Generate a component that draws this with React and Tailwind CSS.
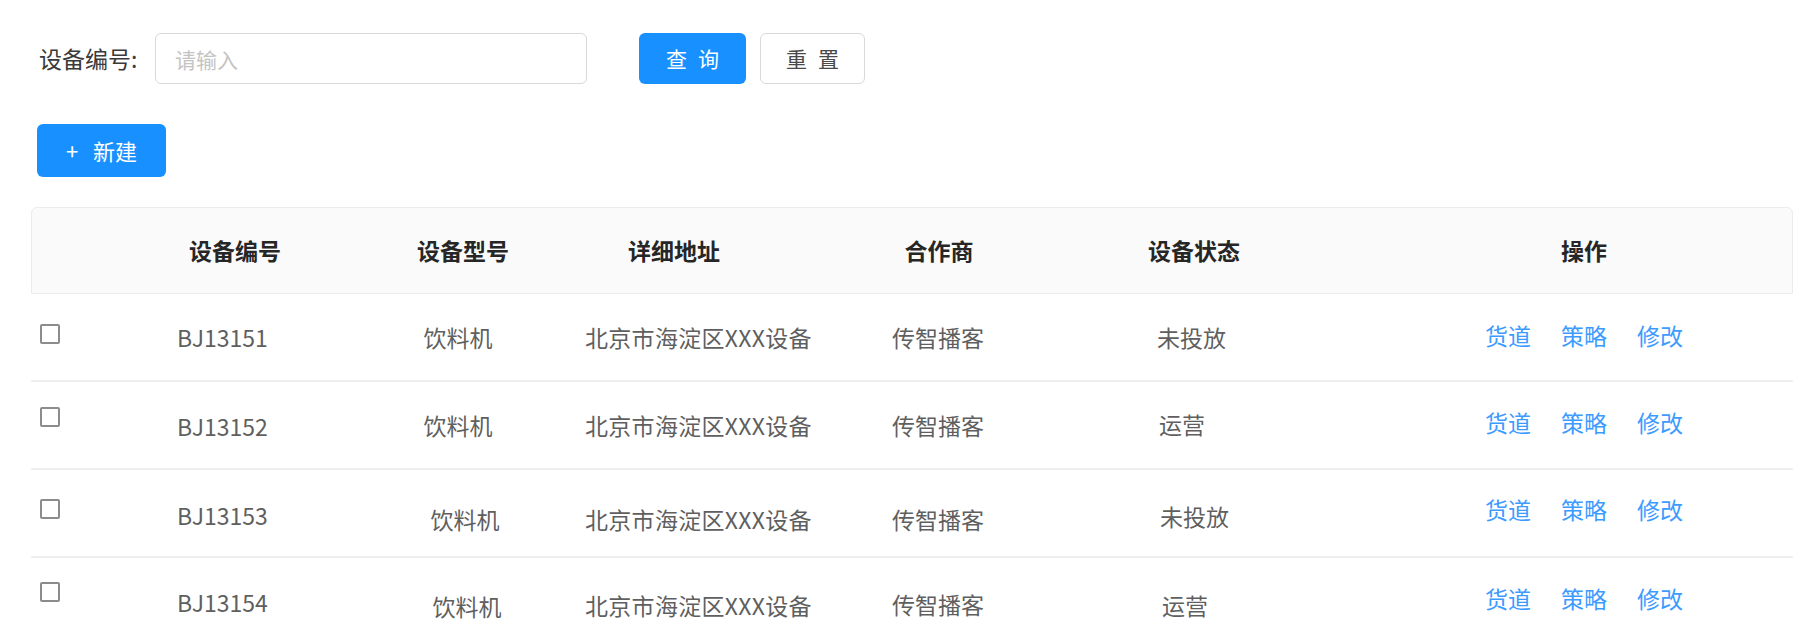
import React from 'react';

// Device list page: search bar, create button and device table
const rows = [
  {
    id: 'BJ13151', model: '饮料机', status: '未投放',
    cb: '-translate-y-[3px]', idc: '', modelc: '-translate-x-[4px]', addrc: '', partc: '', statc: 'pl-[51px]', linkc: '-translate-y-[2px]',
  },
  {
    id: 'BJ13152', model: '饮料机', status: '运营',
    cb: '-translate-y-[8px]', idc: 'translate-y-[1px]', modelc: '-translate-x-[4px]', addrc: '', partc: '', statc: 'pl-[53px] -translate-y-[1px]', linkc: '-translate-y-[3px]',
  },
  {
    id: 'BJ13153', model: '饮料机', status: '未投放',
    cb: '-translate-y-[4px]', idc: 'translate-y-[2px]', modelc: 'translate-x-[3px] translate-y-[6px]', addrc: 'translate-y-[6px]', partc: 'translate-y-[6px]', statc: 'pl-[54px] translate-y-[3px]', linkc: '-translate-y-[4px]',
  },
  {
    id: 'BJ13154', model: '饮料机', status: '运营',
    cb: '-translate-y-[9px]', idc: 'translate-y-[1px]', modelc: 'translate-x-[5px] translate-y-[5px]', addrc: 'translate-y-[4px]', partc: 'translate-y-[3px]', statc: 'pl-[56px] translate-y-[4px]', linkc: '-translate-y-[3px]',
  },
];

const cols = 'grid grid-cols-[89px_228px_228px_194px_336px_174px_1fr]';

export default function App() {
  return (
    <div className="min-h-screen bg-white pt-[33px] pl-[31px] pr-[19px] font-['Noto_Sans_CJK_SC',sans-serif]">
      {/* Search bar */}
      <div className="flex items-center h-[51px]">
        <label className="ml-[8px] w-[98px] text-[23px] text-[#3a3a3a] whitespace-nowrap">设备编号:</label>
        <input
          placeholder="请输入"
          className="ml-[18px] w-[432px] h-[51px] px-[19px] text-[21px] border border-[#d9d9d9] rounded-[6px] outline-none placeholder:text-[#c4c4c4]"
        />
        <button className="ml-[52px] w-[107px] h-[51px] flex items-center justify-center gap-[11px] bg-[#1890ff] text-white text-[21px] rounded-[6px]">
          <span>查</span><span>询</span>
        </button>
        <button className="ml-[14px] w-[105px] h-[51px] flex items-center justify-center gap-[11px] bg-white border border-[#d9d9d9] text-[#4a4a4a] text-[21px] rounded-[6px]">
          <span>重</span><span>置</span>
        </button>
      </div>

      {/* Create */}
      <button className="mt-[40px] ml-[6px] w-[129px] h-[53px] flex items-center justify-center gap-[15px] bg-[#1890ff] text-white text-[22px] rounded-[6px]">
        <span>+</span>
        <span>新建</span>
      </button>

      {/* Table */}
      <div className="mt-[30px]">
        <div className={`${cols} h-[87px] bg-[#fafafa] border border-[#ececec] rounded-t-[6px] text-[23px] font-bold text-[#262626]`}>
          <div />
          <div className="flex items-center justify-center">设备编号</div>
          <div className="flex items-center justify-center">设备型号</div>
          <div className="flex items-center justify-center">详细地址</div>
          <div className="flex items-center justify-center">合作商</div>
          <div className="flex items-center justify-center">设备状态</div>
          <div className="flex items-center justify-center pl-[95px]">操作</div>
        </div>

        {rows.map((r) => (
          <div key={r.id} className={`${cols} h-[88px] border-b-2 border-[#efefef] text-[23px] text-[#5f5f5f] whitespace-nowrap`}>
            <div className="flex items-center pl-[9px]">
              <div className={`w-[20px] h-[20px] border-2 border-[#8c8c8c] rounded-[2px] ${r.cb}`} />
            </div>
            <div className="flex items-center pl-[57px]">
              <span className={r.idc}>{r.id}</span>
            </div>
            <div className="flex items-center justify-center">
              <span className={r.modelc}>{r.model}</span>
            </div>
            <div className="flex items-center pl-[9px]">
              <span className={`tracking-[0.3px] ${r.addrc}`}>北京市海淀区XXX设备</span>
            </div>
            <div className="flex items-center justify-center">
              <span className={r.partc}>传智播客</span>
            </div>
            <div className={`flex items-center ${r.statc}`}>
              <span>{r.status}</span>
            </div>
            <div className={`flex items-center pl-[205px] gap-[30px] text-[#3d9bff] ${r.linkc}`}>
              <a className="cursor-pointer">货道</a>
              <a className="cursor-pointer">策略</a>
              <a className="cursor-pointer">修改</a>
            </div>
          </div>
        ))}
      </div>
    </div>
  );
}
